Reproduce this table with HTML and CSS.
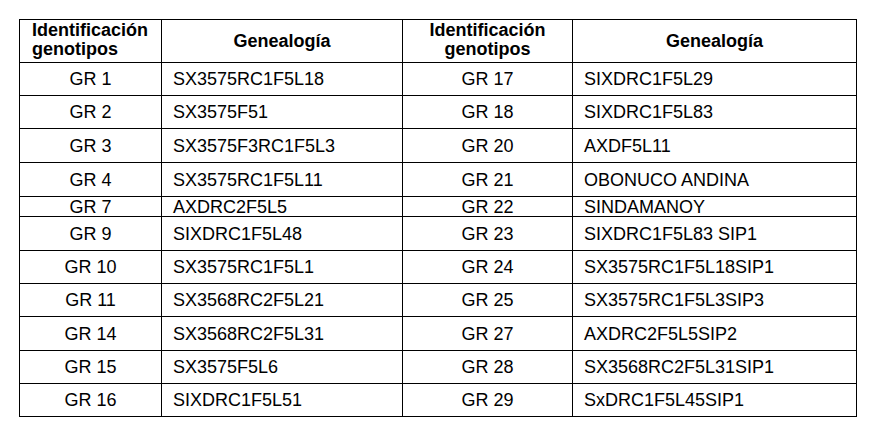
FILE: index.html
```html
<!DOCTYPE html>
<html lang="es">
<head>
<meta charset="utf-8">
<title>Genotipos</title>
<link rel="stylesheet" href="styles.css">
</head>
<body>
<table class="geno">
  <colgroup>
    <col class="c-id">
    <col class="c-gen">
    <col class="c-id2">
    <col class="c-gen2">
  </colgroup>
  <thead>
    <tr class="head">
      <th class="two id-left">Identificación<br>genotipos</th>
      <th>Genealogía</th>
      <th class="two">Identificación<br>genotipos</th>
      <th>Genealogía</th>
    </tr>
  </thead>
  <tbody>
    <tr><td class="id">GR 1</td><td class="gen">SX3575RC1F5L18</td><td class="id">GR 17</td><td class="gen">SIXDRC1F5L29</td></tr>
    <tr><td class="id">GR 2</td><td class="gen">SX3575F51</td><td class="id">GR 18</td><td class="gen">SIXDRC1F5L83</td></tr>
    <tr class="tall"><td class="id">GR 3</td><td class="gen">SX3575F3RC1F5L3</td><td class="id">GR 20</td><td class="gen">AXDF5L11</td></tr>
    <tr class="tall"><td class="id">GR 4</td><td class="gen">SX3575RC1F5L11</td><td class="id">GR 21</td><td class="gen">OBONUCO ANDINA</td></tr>
    <tr class="thin"><td class="id">GR 7</td><td class="gen">AXDRC2F5L5</td><td class="id">GR 22</td><td class="gen">SINDAMANOY</td></tr>
    <tr class="tall"><td class="id">GR 9</td><td class="gen">SIXDRC1F5L48</td><td class="id">GR 23</td><td class="gen">SIXDRC1F5L83 SIP1</td></tr>
    <tr><td class="id">GR 10</td><td class="gen">SX3575RC1F5L1</td><td class="id">GR 24</td><td class="gen">SX3575RC1F5L18SIP1</td></tr>
    <tr><td class="id">GR 11</td><td class="gen">SX3568RC2F5L21</td><td class="id">GR 25</td><td class="gen">SX3575RC1F5L3SIP3</td></tr>
    <tr class="tall"><td class="id">GR 14</td><td class="gen">SX3568RC2F5L31</td><td class="id">GR 27</td><td class="gen">AXDRC2F5L5SIP2</td></tr>
    <tr><td class="id">GR 15</td><td class="gen">SX3575F5L6</td><td class="id">GR 28</td><td class="gen">SX3568RC2F5L31SIP1</td></tr>
    <tr><td class="id">GR 16</td><td class="gen">SIXDRC1F5L51</td><td class="id">GR 29</td><td class="gen">SxDRC1F5L45SIP1</td></tr>
  </tbody>
</table>
</body>
</html>
```
FILE: styles.css
```css
html, body {
  margin: 0;
  padding: 0;
  background: #ffffff;
}

body {
  padding: 19px 0 0 19px;
  font-family: "Liberation Sans", Arial, sans-serif;
  color: #000000;
}

.geno {
  border-collapse: collapse;
  table-layout: fixed;
  width: 837px;
  font-size: 18px;
}

.c-id { width: 142px; }
.c-gen { width: 241px; }
.c-id2 { width: 170px; }
.c-gen2 { width: 284px; }

.geno th,
.geno td {
  border: 1px solid #000000;
  padding: 0;
  vertical-align: middle;
}

.geno th {
  font-weight: bold;
  line-height: 19px;
  text-align: center;
  height: 42px;
}

.geno th.two {
  padding-bottom: 3px;
  height: 39px;
}

.geno th.id-left {
  text-align: left;
  padding-left: 12px;
}

.geno td {
  height: 32px;
  line-height: 20px;
}

.geno tr.tall td {
  height: 33px;
}

.geno tr.thin td {
  height: 19px;
  line-height: 18px;
}

.geno td.id {
  text-align: center;
}

.geno td.gen {
  padding-left: 11px;
}
```
